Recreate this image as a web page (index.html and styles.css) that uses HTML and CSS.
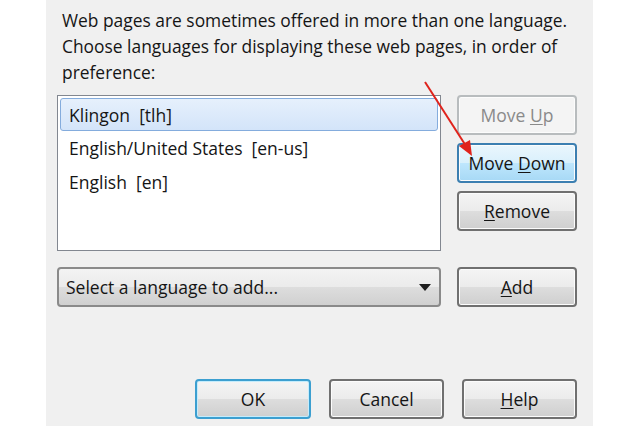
FILE: index.html
```html
<!DOCTYPE html>
<html lang="en">
<head>
    <meta charset="UTF-8">
    <meta name="viewport" content="width=device-width, initial-scale=1.0">
    <title>Language Preference</title>
    <link rel="stylesheet" href="styles.css">
</head>
<body>
    <div class="dialog">
        <p class="intro">Web pages are sometimes offered in more than one language. Choose languages for displaying these web pages, in order of preference:</p>
        <div class="list-row">
            <div class="listbox">
                <div class="item selected">Klingon&nbsp; [tlh]</div>
                <div class="item">English/United States&nbsp; [en-us]</div>
                <div class="item">English&nbsp; [en]</div>
            </div>
            <div class="side-buttons">
                <button class="btn disabled">Move <u>U</u>p</button>
                <button class="btn hover">Move <u>D</u>own</button>
                <button class="btn"><u>R</u>emove</button>
            </div>
        </div>
        <div class="add-row">
            <div class="combo">
                <span>Select a language to add...</span>
                <span class="caret"></span>
            </div>
            <button class="btn"><u>A</u>dd</button>
        </div>
        <div class="footer">
            <button class="btn default">OK</button>
            <button class="btn">Cancel</button>
            <button class="btn"><u>H</u>elp</button>
        </div>
        <!-- annotation arrow drawn over the dialog -->
        <svg class="arrow" width="640" height="426" viewBox="0 0 640 426">
            <line x1="425" y1="82" x2="466" y2="146" stroke="#e0231c" stroke-width="2"/>
            <polygon points="472,156 459,146 470,140" fill="#e0231c"/>
        </svg>
    </div>
</body>
</html>
```

FILE: styles.css
```css
body {
    margin: 0;
    padding: 0;
    background-color: #ffffff;
    font-family: "Open Sans", "Noto Sans", sans-serif;
    color: #151515;
}
.dialog {
    margin-left: 46px;
    width: 547px;
    height: 426px;
    box-sizing: border-box;
    padding: 0 16px 0 11px;
    background-color: #f0f0f0;
}
.intro {
    margin: 0;
    padding: 7px 0 0 5px;
    font-size: 17.4px;
    line-height: 26px;
}
.list-row {
    display: flex;
    gap: 16px;
    margin-top: 10px;
}
.listbox {
    width: 384px;
    height: 156px;
    box-sizing: border-box;
    border: 1px solid #828790;
    background-color: white;
    padding: 2px;
}
.item {
    height: 34px;
    line-height: 32px;
    padding-left: 8px;
    font-size: 17.5px;
    border: 1px solid transparent;
    box-sizing: border-box;
}
.item.selected {
    height: 33px;
    border-color: #84acdd;
    border-radius: 3px;
    background: linear-gradient(#e6f0fc, #d3e4f9);
}
.side-buttons {
    display: flex;
    flex-direction: column;
    gap: 8px;
}
.btn {
    width: 120px;
    height: 40px;
    font-family: "Open Sans", "Noto Sans", sans-serif;
    font-size: 17.5px;
    color: #151515;
    border: 2px solid #707070;
    border-radius: 4px;
    background: linear-gradient(#f4f4f4 0%, #ebebeb 50%, #dddddd 51%, #cfcfcf 100%);
    box-shadow: inset 0 0 0 1px #fcfcfc;
    padding: 0;
}
.btn u {
    text-underline-offset: 2px;
}
.btn.disabled {
    color: #8a8a8a;
    border-color: #b8bcbe;
    background: #f4f4f4;
}
.btn.hover {
    border-color: #3c7fb1;
    background: linear-gradient(#eaf6fd 0%, #d9f0fc 50%, #bee6fd 51%, #a7d9f5 100%);
}
.btn.default {
    border-color: #3c9fd0;
    box-shadow: inset 0 0 0 1px #c4ecfc;
}
.add-row {
    display: flex;
    gap: 16px;
    margin-top: 16px;
}
.combo {
    width: 384px;
    height: 40px;
    box-sizing: border-box;
    display: flex;
    align-items: center;
    justify-content: space-between;
    padding: 0 8px 0 7px;
    font-size: 17.5px;
    border: 2px solid #8a8a8a;
    border-radius: 4px;
    background: linear-gradient(#f3f3f3 0%, #ebebeb 50%, #dddddd 51%, #d0d0d0 100%);
}
.caret {
    width: 0;
    height: 0;
    border-left: 6px solid transparent;
    border-right: 6px solid transparent;
    border-top: 7px solid #1e1e1e;
}
.footer {
    display: flex;
    justify-content: flex-end;
    gap: 18px;
    margin-top: 72px;
}
.footer .btn {
    width: 115px;
}
.footer .btn.default {
    width: 116px;
}
.arrow {
    position: absolute;
    left: 0;
    top: 0;
    pointer-events: none;
}
```
